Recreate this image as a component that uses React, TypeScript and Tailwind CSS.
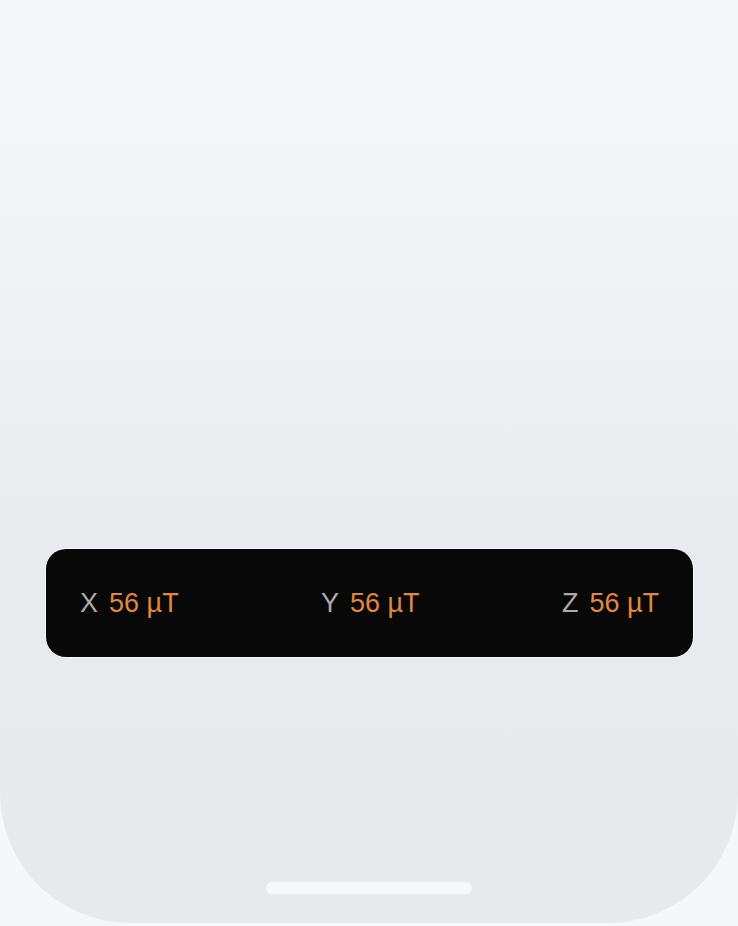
import React from 'react';

interface AxisReadingProps {
    axis: string,
    value: number,
    unit: string
}

const AxisReading = ({axis, value, unit}: AxisReadingProps) => {
    return (
        <div className="flex items-baseline gap-[11px] text-[27px] leading-none">
            <span className="text-[#ababab]">{axis}</span>
            <span className="text-[#e4873a]">{value} {unit}</span>
        </div>
    );
};

const App = () => {
    const readings = [
        {axis: 'X', value: 56},
        {axis: 'Y', value: 56},
        {axis: 'Z', value: 56},
    ];

    return (
        <div
            className="w-[738px] h-[926px] bg-[#f6f7f9] overflow-hidden"
            style={{fontFamily: '"Liberation Sans", Arial, sans-serif'}}
        >
            {/* 기기 화면 영역 */}
            <div className="h-[923px] flex flex-col rounded-b-[130px] bg-gradient-to-b from-[#f6f7f9] from-10% via-[#e9eaee] via-60% to-[#e8e9ed]">
                <div className="pt-[549px] pl-[46px] pr-[45px]">
                    <div className="h-[108px] rounded-[20px] bg-[#080808] shadow-[0_0_0_1px_rgba(255,255,255,0.6)] flex items-center justify-between pl-[34px] pr-[34px]">
                        {readings.map((r) => (
                            <AxisReading key={r.axis} axis={r.axis} value={r.value} unit="µT"/>
                        ))}
                    </div>
                </div>

                {/* 홈 인디케이터 */}
                <div className="mt-auto mb-[29px] flex justify-center">
                    <div className="w-[206px] h-[12px] rounded-full bg-[#f7f8fa]"/>
                </div>
            </div>
        </div>
    );
};

export default App;
